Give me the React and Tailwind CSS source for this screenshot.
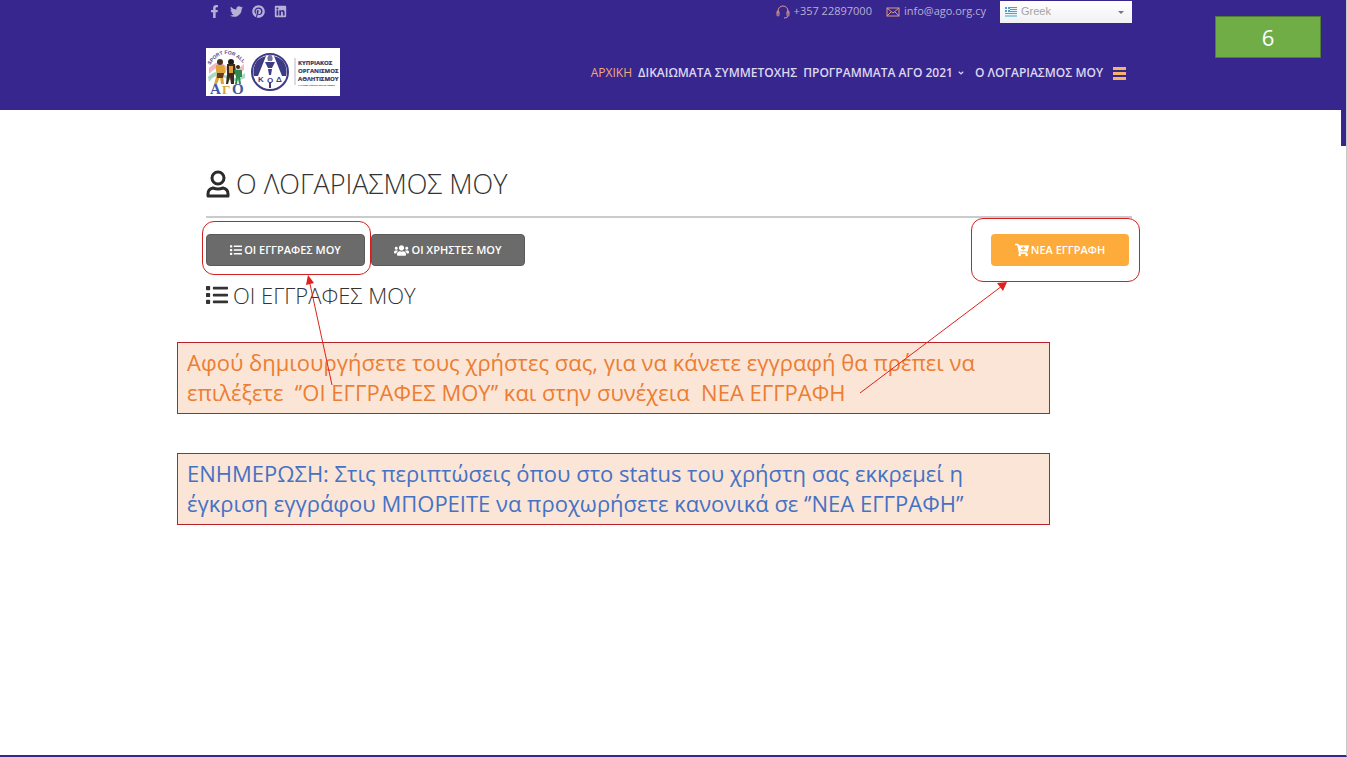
import {FaFacebookF, FaTwitter, FaPinterest, FaLinkedin, FaList, FaUsers, FaCartPlus, FaAngleDown} from 'react-icons/fa';

const socials = [
    {label: 'Facebook', Icon: FaFacebookF},
    {label: 'Twitter', Icon: FaTwitter},
    {label: 'Pinterest', Icon: FaPinterest},
    {label: 'LinkedIn', Icon: FaLinkedin},
];

const Logo = () => (
    <a href="#home" aria-label="ΚΟΑ" className="flex h-12 w-[134px] items-center bg-white">
        <svg viewBox="0 0 134 48" className="h-12 w-[134px]">
            <defs>
                <path id="logo-arc" d="M4 17 Q19 -5 39 17" />
            </defs>
            <path d="M3 20 Q12 10 20 18 T38 16 V22 Q28 28 20 22 T3 26 Z" fill="#f3b9c0" />
            <path d="M2 29 Q10 20 19 27 T39 25 V30 Q28 36 19 30 T3 34 Z" fill="#a9d9c8" />
            <text fontFamily="Liberation Sans" fontSize="5" fontWeight="700" fill="#5a3f86">
                <textPath href="#logo-arc">SPORT FOR ALL</textPath>
            </text>
            <circle cx="14" cy="14" r="3" fill="#4a3324" />
            <path d="M10 17 h8 l2 7 -3 3 1 9 h-3 l-1 -7 -3 7 h-3 l3 -10 -1 -3 Z" fill="#e0a339" />
            <path d="M11 25 h7 l-1 5 h-6 Z" fill="#5b3b22" />
            <circle cx="25" cy="14" r="3" fill="#1c1a1c" />
            <path d="M21 16 h8 l1 8 -2 3 v9 h-3 l-1 -7 -2 7 h-2 l1 -10 Z" fill="#3c2a20" />
            <path d="M23 18 h4 v7 h-4 Z" fill="#dca038" />
            <circle cx="32" cy="19" r="2" fill="#3a2b20" />
            <path d="M28 22 h8 v7 h-2 l1 7 h-2 l-1 -6 -1 6 h-2 l1 -7 Z" fill="#2f8a4d" />
            <text x="4" y="46" fontFamily="Liberation Serif" fontSize="15" fontWeight="700" fill="#4257a0">Α</text>
            <text x="16" y="46" fontFamily="Liberation Serif" fontSize="13" fontWeight="700" fill="#d9a441">Γ</text>
            <text x="26" y="46" fontFamily="Liberation Serif" fontSize="15" fontWeight="700" fill="#4257a0">Ο</text>

            <circle cx="64" cy="24" r="18" fill="#fff" stroke="#3d3b86" strokeWidth="2" />
            <path d="M60 8 L52 28 L48 28 Q46 20 51 13 Q55 9 60 8 Z M68 8 L76 28 L80 28 Q82 20 77 13 Q73 9 68 8 Z" fill="#3d3b86" />
            <path d="M64 6 q4 3 2 7 h-4 q-2 -4 2 -7 Z" fill="#77759f" />
            <path d="M59 14 h10 l-3 6 h-4 Z M62 21 h4 l-1 6 h-2 Z M63 34 h2 v6 h-2 Z" fill="#3d3b86" />
            <g fontFamily="Liberation Sans" fontSize="8" fontWeight="700" fill="#3d3b86">
                <text x="52" y="34">Κ</text>
                <text x="61" y="35">Ο</text>
                <text x="70" y="34">Δ</text>
            </g>

            <path d="M89 10 V37" stroke="#b8b8c6" />
            <g fontFamily="Open Sans" fontSize="6" fontWeight="700" fill="#34325f" stroke="#34325f" strokeWidth="0.2">
                <text x="92" y="17">ΚΥΠΡΙΑΚΟΣ</text>
                <text x="92" y="25">ΟΡΓΑΝΙΣΜΟΣ</text>
                <text x="92" y="33">ΑΘΛΗΤΙΣΜΟΥ</text>
            </g>
            <text x="92" y="38" fontFamily="Liberation Sans" fontSize="2" fontWeight="700" fill="#34325f">Η Ανώτατη Αθλητική Αρχή της Κύπρου</text>
        </svg>
    </a>
);

const UserIcon = () => (
    <svg viewBox="0 0 24 28" fill="none" stroke="#2b2b2b" strokeWidth="3" strokeLinejoin="round" className="h-7 w-6">
        <circle cx="12" cy="8" r="6" />
        <path d="M7 18 Q12 20 17 18 Q22 19 22 24 V26 H2 V24 Q2 19 7 18 Z" />
    </svg>
);

const HeadsetIcon = () => (
    <svg viewBox="0 0 14 14" fill="none" stroke="#d99a86" className="h-3.5 w-3.5">
        <path d="M2 9 V6 a5 5 0 0 1 10 0 V9" />
        <rect x="1" y="6" width="2" height="5" rx="1" />
        <rect x="11" y="6" width="2" height="5" rx="1" />
        <path d="M12 11 Q12 13 8 13" />
    </svg>
);

const MailIcon = () => (
    <svg viewBox="0 0 14 10" fill="none" stroke="#d99a86" className="h-2.5 w-3.5">
        <rect x="1" y="1" width="12" height="8" />
        <path d="M1 1 L7 6 L13 1 M1 9 L5 5 M13 9 L9 5" />
    </svg>
);

const GreekFlag = () => (
    <svg viewBox="0 0 12 10" className="pointer-events-none absolute left-[5px] top-[6px] h-2.5 w-3">
        <rect width="12" height="10" fill="#e8f5fb" />
        <path d="M0 0.5 H12 M0 2.5 H12 M0 4.5 H12 M0 6.5 H12 M0 9 H12" stroke="#4ba3cf" />
        <rect width="5" height="5" fill="#4ba3cf" />
        <path d="M2.5 0 V5 M0 2.5 H5" stroke="#fff" />
    </svg>
);

const TopBar = () => (
    <div className="flex h-[23px] items-center justify-between">
        <div className="flex items-center gap-[9px] pb-px pl-0.5">
            {socials.map(({label, Icon}) => (
                <a key={label} href="#social" aria-label={label} className="text-[#b6b0d4]">
                    <Icon className="h-[13px] w-[13px]" />
                </a>
            ))}
        </div>
        <div className="flex items-center text-[11px] text-[#b6b0d4]">
            <a href="tel:+35722897000" className="flex items-center gap-1">
                <HeadsetIcon />
                +357 22897000
            </a>
            <a href="mailto:info@ago.org.cy" className="ml-3.5 flex items-center gap-1">
                <MailIcon />
                info@ago.org.cy
            </a>
            <div className="relative ml-3.5">
                <select
                    aria-label="Language"
                    className="block h-[22px] w-[132px] appearance-none bg-linear-to-b from-white to-[#f1f1f4] pl-[21px] font-['Liberation_Sans',sans-serif] text-[11px] text-[#a3a3a3]"
                >
                    <option>Greek</option>
                </select>
                <GreekFlag />
                <span className="pointer-events-none absolute right-2 top-[10px] border-x-3 border-t-3 border-x-transparent border-t-[#777]" />
            </div>
        </div>
    </div>
);

const Nav = () => (
    <nav className="flex items-center pt-0.5 text-xs font-semibold text-[#dcd8f0]">
        <a href="#home" className="mr-1.5 font-normal text-[#f0a978]">ΑΡΧΙΚΗ</a>
        <a href="#rights" className="mr-1.5">ΔΙΚΑΙΩΜΑΤΑ ΣΥΜΜΕΤΟΧΗΣ</a>
        <a href="#programs" className="mr-2.5 flex items-center gap-1">
            ΠΡΟΓΡΑΜΜΑΤΑ ΑΓΟ 2021
            <FaAngleDown className="h-2 w-2" />
        </a>
        <a href="#account" className="mr-2.5">Ο ΛΟΓΑΡΙΑΣΜΟΣ ΜΟΥ</a>
        <button type="button" aria-label="Menu" className="mr-1.5 flex w-[13px] flex-col gap-0.5">
            <span className="h-[3px] w-full bg-[#f8b26a]" />
            <span className="h-[3px] w-full bg-[#f8b26a]" />
            <span className="h-[3px] w-full bg-[#f8b26a]" />
        </button>
    </nav>
);

const Note = ({className, children}) => (
    <p className={`-ml-[29px] w-[873px] border border-[#b8232b] bg-[#fbe5d6] px-[9px] pt-1 pb-1.5 text-[22px] leading-[30px] whitespace-pre-wrap ${className}`}>
        {children}
    </p>
);

// Red pointers from the note to the two highlighted buttons
const Pointers = () => (
    <svg
        viewBox="0 0 926 300"
        fill="none"
        stroke="#e0201c"
        className="pointer-events-none absolute left-0 top-0 h-[300px] w-[926px]"
    >
        <path d="M126 275 L104 174" />
        <path d="M654 283 L796 176" />
        <path d="M102 165 L108 173 L100 175 Z" fill="#e0201c" stroke="none" />
        <path d="M801 172 L797 181 L791 173 Z" fill="#e0201c" stroke="none" />
    </svg>
);

const buttonBase = 'flex h-8 items-center justify-center gap-0.5 rounded text-[11px] font-semibold text-white';

export default function App() {
    return (
        <div className="relative flex min-h-screen flex-col border-r border-b-2 border-r-[#c9c9c9] border-b-[#38268f] bg-white font-['Open_Sans',sans-serif]">
            <header className="h-[110px] bg-[#38268f] pr-2">
                <div className="mx-auto max-w-[926px]">
                    <TopBar />
                    <div className="flex items-center justify-between pt-[25px]">
                        <Logo />
                        <Nav />
                    </div>
                </div>
            </header>
            <div className="absolute right-0 top-[110px] h-9 w-[5px] bg-[#38268f]" />
            <div className="absolute right-[25px] top-4 flex h-[42px] w-[106px] items-center justify-center border border-[#507e32] bg-[#70ad47] text-[22px] text-white">
                6
            </div>

            <main className="pr-2">
                <div className="relative mx-auto max-w-[926px]">
                    <h1 className="flex h-[108px] items-center gap-1.5 border-b-2 border-[#cbcbcb] pt-[42px] text-[27px] font-light text-[#333]">
                        <UserIcon />
                        Ο ΛΟΓΑΡΙΑΣΜΟΣ ΜΟΥ
                    </h1>
                    <div className="flex items-center gap-1.5 pt-4 pr-[3px]">
                        <div className="relative">
                            <button type="button" className={`${buttonBase} w-[159px] border border-[#5a5a5a] bg-[#6b6b6b]`}>
                                <FaList className="h-3 w-3" />
                                ΟΙ ΕΓΓΡΑΦΕΣ ΜΟΥ
                            </button>
                            <span className="pointer-events-none absolute -left-1 -top-[13px] -bottom-[9px] w-[169px] rounded-xl border border-[#d0201f]" />
                        </div>
                        <button type="button" className={`${buttonBase} w-[154px] border border-[#5a5a5a] bg-[#6b6b6b]`}>
                            <FaUsers className="h-[15px] w-[15px]" />
                            ΟΙ ΧΡΗΣΤΕΣ ΜΟΥ
                        </button>
                        <div className="relative ml-auto">
                            <button type="button" className={`${buttonBase} w-[138px] bg-[#fdab3a]`}>
                                <FaCartPlus className="h-3.5 w-3.5" />
                                ΝΕΑ ΕΓΓΡΑΦΗ
                            </button>
                            <span className="pointer-events-none absolute -left-5 -right-[11px] -top-4 -bottom-4 rounded-xl border border-[#d0201f]" />
                        </div>
                    </div>
                    <h2 className="mt-[13px] flex h-8 items-center gap-[5px] text-[22px] font-light text-[#333]">
                        <FaList className="h-[22px] w-[22px]" />
                        ΟΙ ΕΓΓΡΑΦΕΣ ΜΟΥ
                    </h2>
                    <Note className="mt-[31px] text-[#ed7d31]">
                        {'Αφού δημιουργήσετε τους χρήστες σας, για να κάνετε εγγραφή θα πρέπει να\nεπιλέξετε  ‘’ΟΙ ΕΓΓΡΑΦΕΣ ΜΟΥ’’ και στην συνέχεια  ΝΕΑ ΕΓΓΡΑΦΗ'}
                    </Note>
                    <Note className="mt-[39px] text-[#4472c4]">
                        {'ΕΝΗΜΕΡΩΣΗ: Στις περιπτώσεις όπου στο status του χρήστη σας εκκρεμεί η\nέγκριση εγγράφου ΜΠΟΡΕΙΤΕ να προχωρήσετε κανονικά σε ‘’ΝΕΑ ΕΓΓΡΑΦΗ’’'}
                    </Note>
                    <Pointers />
                </div>
            </main>
        </div>
    );
}
